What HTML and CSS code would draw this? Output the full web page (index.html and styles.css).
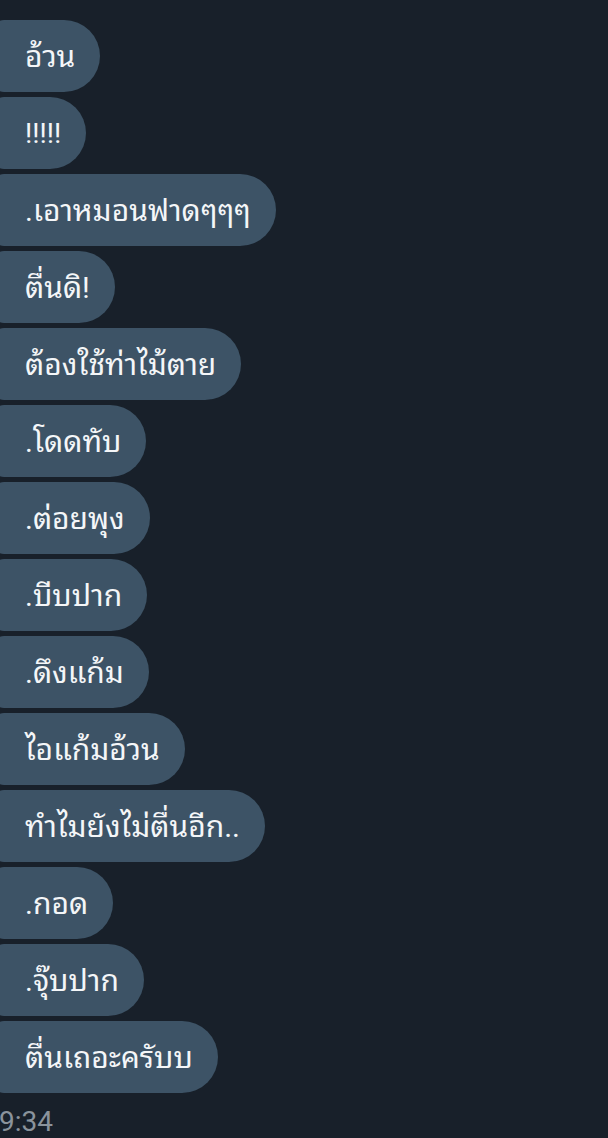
FILE: index.html
```html
<!DOCTYPE html>
<html lang="th">
<head>
<meta charset="utf-8">
<link rel="stylesheet" href="styles.css">
</head>
<body>
<div class="chat">
  <div class="bubble">อ้วน</div>
  <div class="bubble bang">!!!!!</div>
  <div class="bubble">.เอาหมอนฟาดๆๆๆ</div>
  <div class="bubble">ตื่นดิ!</div>
  <div class="bubble">ต้องใช้ท่าไม้ตาย</div>
  <div class="bubble">.โดดทับ</div>
  <div class="bubble">.ต่อยพุง</div>
  <div class="bubble">.บีบปาก</div>
  <div class="bubble">.ดึงแก้ม</div>
  <div class="bubble">ไอแก้มอ้วน</div>
  <div class="bubble">ทำไมยังไม่ตื่นอีก..</div>
  <div class="bubble">.กอด</div>
  <div class="bubble">.จุ๊บปาก</div>
  <div class="bubble">ตื่นเถอะครับบ</div>
  <div class="time">9:34</div>
</div>
</body>
</html>
```

FILE: styles.css
```css
html, body {
  margin: 0;
  padding: 0;
  background: #18202a;
  height: 100%;
  overflow: hidden;
}
.chat {
  display: flex;
  flex-direction: column;
  align-items: flex-start;
  gap: 5px;
  padding-top: 20px;
  font-family: Roboto, "Noto Sans Thai Looped", sans-serif;
}
.bubble {
  margin-left: -6px;
  background: #3d5366;
  color: #f4f6f8;
  font-size: 30px;
  line-height: 36px;
  height: 72px;
  box-sizing: border-box;
  padding: 19px 25px 17px 31px;
  border-radius: 10px 36px 36px 10px;
  white-space: nowrap;
}
.bang {
  font-size: 28px;
}
.time {
  font-family: Roboto, sans-serif;
  font-size: 28px;
  line-height: 30px;
  color: #8a939c;
  margin-top: 9px;
  margin-left: -1px;
}
```
